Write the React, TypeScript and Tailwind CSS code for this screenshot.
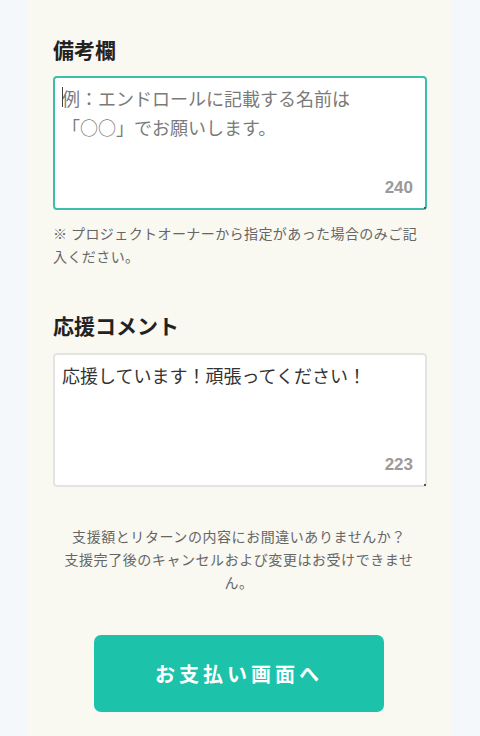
import React from "react";

const font = { fontFamily: '"Noto Sans CJK JP", "Noto Sans", sans-serif' };

export default function App() {
  return (
    <div className="min-h-[736px] w-[480px] bg-[#f4f8fb] flex justify-center" style={font}>
      <div className="w-[424px] ml-[-2px] bg-[#f9f8f1] px-[26px] pt-[35px] pb-10 flex flex-col">
        <h2 className="text-[21px] leading-[28px] font-bold text-[#222]">備考欄</h2>
        <div className="relative mt-[13px] h-[134px] w-[374px]">
          <textarea
            className="h-full w-full resize-none rounded-[4px] border-2 border-[#3dbdab] bg-white px-[7px] pt-[6px] text-[18px] leading-[29px] text-[#333] placeholder:text-[#7a7a7a] outline-none"
            placeholder={"例：エンドロールに記載する名前は\n「○○」でお願いします。"}
            style={font}
          />
          <span className="absolute left-[9px] top-[11px] h-[20px] w-px bg-[#444]" />
          <span className="absolute right-[14px] bottom-[12px] text-[17px] leading-[20px] font-bold text-[#9a9a9a]" style={{ fontFamily: '"Liberation Sans", Arial, sans-serif' }}>240</span>
          <span className="absolute right-[1px] bottom-[1px] h-[2px] w-[2px] bg-[#555]" />
        </div>
        <p className="mt-[12px] text-[14px] leading-[23px] tracking-[0.03em] text-[#666]">
          ※ プロジェクトオーナーから指定があった場合のみご記入ください。
        </p>

        <h2 className="mt-[43px] text-[21px] leading-[28px] font-bold text-[#222]">応援コメント</h2>
        <div className="relative mt-[14px] h-[134px] w-[374px]">
          <textarea
            className="h-full w-full resize-none rounded-[4px] border-2 border-[#e4e4e4] bg-white px-[7px] pt-[6px] text-[18px] leading-[29px] text-[#333] outline-none"
            defaultValue="応援しています！頑張ってください！"
            style={font}
          />
          <span className="absolute right-[14px] bottom-[12px] text-[17px] leading-[20px] font-bold text-[#9a9a9a]" style={{ fontFamily: '"Liberation Sans", Arial, sans-serif' }}>223</span>
          <span className="absolute right-[1px] bottom-[1px] h-[2px] w-[2px] bg-[#555]" />
        </div>

        <p className="mt-[38px] px-2 text-center text-[14px] leading-[23px] tracking-[0.04em] text-[#666]">
          支援額とリターンの内容にお間違いありませんか？<br />
          支援完了後のキャンセルおよび変更はお受けできません。
        </p>

        <button className="mx-auto mt-[41px] flex h-[77px] w-[290px] items-center justify-center rounded-[7px] bg-[#1cc3aa] text-[20px] font-bold tracking-[0.2em] text-white">
          お支払い画面へ
        </button>
      </div>
    </div>
  );
}
